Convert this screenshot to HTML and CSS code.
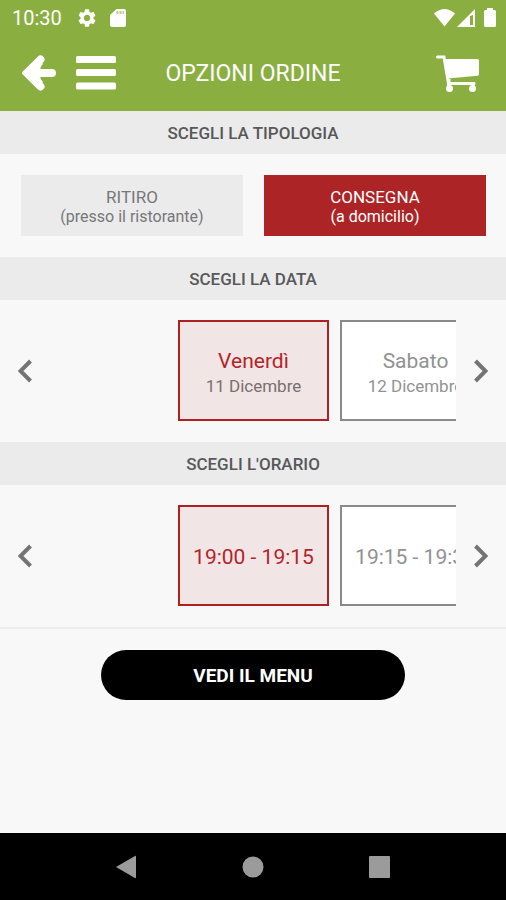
FILE: index.html
```html
<!DOCTYPE html>
<html lang="it">
<head>
<meta charset="utf-8">
<meta name="viewport" content="width=device-width, initial-scale=1">
<title>Opzioni ordine</title>
<link rel="stylesheet" href="styles.css">
</head>
<body>
<div class="top">
  <div class="status">
    <span class="clock">10:30</span>
    <svg class="gear" width="18" height="18" viewBox="2 2 20 20" aria-hidden="true"><path d="M19.14 12.94c.04-.3.06-.61.06-.94 0-.32-.02-.64-.07-.94l2.03-1.58c.18-.14.23-.41.12-.61l-1.92-3.32c-.12-.22-.37-.29-.59-.22l-2.39.96c-.5-.38-1.03-.7-1.62-.94l-.36-2.54c-.04-.24-.24-.41-.48-.41h-3.84c-.24 0-.43.17-.47.41l-.36 2.54c-.59.24-1.13.57-1.62.94l-2.39-.96c-.22-.08-.47 0-.59.22L2.74 8.87c-.12.21-.08.47.12.61l2.03 1.58c-.05.3-.09.63-.09.94s.02.64.07.94l-2.03 1.58c-.18.14-.23.41-.12.61l1.92 3.32c.12.22.37.29.59.22l2.39-.96c.5.38 1.03.7 1.62.94l.36 2.54c.05.24.24.41.48.41h3.84c.24 0 .44-.17.47-.41l.36-2.54c.59-.24 1.13-.56 1.62-.94l2.39.96c.22.08.47 0 .59-.22l1.92-3.32c.12-.22.07-.47-.12-.61l-2.01-1.58zM12 15.6c-1.98 0-3.6-1.62-3.6-3.6s1.62-3.6 3.6-3.6 3.6 1.62 3.6 3.6-1.62 3.6-3.6 3.6z"/></svg>
    <svg class="card-icon" width="16" height="20" viewBox="0 0 16 20" aria-hidden="true"><path d="M6.500 1H14a2 2 0 0 1 2 2v14a2 2 0 0 1-2 2H2a2 2 0 0 1-2-2V7z"/><path class="slots" d="M6.500 3h2v3h-2zM9.500 3h2v3h-2zM12.500 3h1.500v3h-1.500z"/></svg>
    <span class="spacer"></span>
    <svg width="21" height="18" viewBox="0 0 21 18" aria-hidden="true"><path d="M0 4.500Q10.500-4.500 21 4.500L10.500 17.500z"/></svg>
    <svg class="signal" width="18" height="18" viewBox="0 0 18 18" aria-hidden="true"><path fill-rule="evenodd" d="M18 0v18H0zM13 7v9h3V6z"/></svg>
    <svg class="battery" width="12" height="19" viewBox="0 0 12 19" aria-hidden="true"><path d="M3 0h6v2h1.500Q12 2 12 3.500v14Q12 19 10.500 19h-9Q0 19 0 17.500v-14Q0 2 1.500 2H3z"/></svg>
  </div>
  <header class="bar">
    <div class="bar-left">
      <button type="button" aria-label="Indietro"><svg width="34" height="36" viewBox="0 0 34 36"><path class="arrow" d="M18.500 4.500L5 18l13.500 13.500M6 18h24"/><path d="M0 18L15.500 2.500 21 9l-4 5v8l4 5-5.500 6.500z"/></svg></button>
      <button type="button" aria-label="Menu"><svg width="40" height="34" viewBox="0 0 40 34"><rect width="40" height="7" rx="1.500"/><rect y="13" width="40" height="7" rx="1.500"/><rect y="26.500" width="40" height="7" rx="1.500"/></svg></button>
    </div>
    <h1>OPZIONI ORDINE</h1>
    <div class="bar-right">
      <button type="button" aria-label="Carrello"><svg width="43" height="37" viewBox="0 0 43 37"><path class="cart-line" d="M1.500 2H8l4.500 26.500H38"/><path d="M8.500 4H41.500q1.500 0 1.500 1.500V19q0 1.500-1.500 1.700L12 23.500z"/><circle cx="13.500" cy="33.500" r="3.500"/><circle cx="36.500" cy="33.500" r="3.500"/><path d="M11 24h3.500v8H11zM35 27h4v5h-4z"/></svg></button>
    </div>
  </header>
</div>
<main>
  <section>
    <h2>SCEGLI LA TIPOLOGIA</h2>
    <div class="types">
      <button type="button" class="type">RITIRO<small>(presso il ristorante)</small></button>
      <button type="button" class="type active" aria-pressed="true">CONSEGNA<small>(a domicilio)</small></button>
    </div>
  </section>
  <section>
    <h2>SCEGLI LA DATA</h2>
    <div class="carousel">
      <button type="button" class="chevron" aria-label="Data precedente"><svg width="14" height="24" viewBox="0 0 14 24"><path d="M12.500 2L2.500 12l10 10"/></svg></button>
      <div class="strip">
        <button type="button" class="slot selected" aria-pressed="true">Venerdì<small>11 Dicembre</small></button>
        <button type="button" class="slot">Sabato<small>12 Dicembre</small></button>
      </div>
      <button type="button" class="chevron" aria-label="Data successiva"><svg width="14" height="24" viewBox="0 0 14 24"><path d="M1.500 2l10 10-10 10"/></svg></button>
    </div>
  </section>
  <section>
    <h2>SCEGLI L'ORARIO</h2>
    <div class="carousel">
      <button type="button" class="chevron" aria-label="Orario precedente"><svg width="14" height="24" viewBox="0 0 14 24"><path d="M12.500 2L2.500 12l10 10"/></svg></button>
      <div class="strip">
        <button type="button" class="slot selected" aria-pressed="true">19:00 - 19:15</button>
        <button type="button" class="slot">19:15 - 19:30</button>
      </div>
      <button type="button" class="chevron" aria-label="Orario successivo"><svg width="14" height="24" viewBox="0 0 14 24"><path d="M1.500 2l10 10-10 10"/></svg></button>
    </div>
  </section>
  <div class="action"><button type="button" class="go">VEDI IL MENU</button></div>
</main>
<nav class="system">
  <button type="button" aria-label="Indietro di sistema"><svg width="22" height="24" viewBox="0 0 22 24"><path d="M0 12L19 1q1-.5 1 .5v21q0 1-1 .5z"/></svg></button>
  <button type="button" aria-label="Home"><svg width="22" height="22" viewBox="0 0 22 22"><circle cx="11" cy="11" r="10.500"/></svg></button>
  <button type="button" aria-label="App recenti"><svg width="22" height="22" viewBox="0 0 22 22"><rect x="1" width="21" height="22" rx="1"/></svg></button>
</nav>
</body>
</html>
```
FILE: styles.css
```css
* {
  box-sizing: border-box;
}

body {
  display: flex;
  flex-direction: column;
  min-height: 100vh;
  margin: 0;
  background: #f8f8f8;
  color: #58585a;
  font-family: Roboto, "Liberation Sans", sans-serif;
}

button {
  margin: 0;
  padding: 0;
  border: 0;
  background: none;
  color: inherit;
  font: inherit;
}

svg {
  display: block;
}

.top {
  background: #8aaf40;
  color: #fff;
}

.top svg {
  fill: #fff;
}

.status {
  display: flex;
  align-items: center;
  height: 35px;
  padding: 0 10px 0 12px;
}

.clock {
  font-size: 20px;
}

.gear {
  margin-left: 16px;
}

.card-icon {
  margin-left: 14px;
}

.top .slots {
  fill: #b9cf8d;
}

.spacer {
  flex: 1;
}

.signal {
  margin-left: 2px;
}

.battery {
  margin-left: 9px;
}

.bar {
  display: grid;
  grid-template-columns: 1fr auto 1fr;
  align-items: center;
  height: 76px;
  padding: 0 22px;
}

.bar-left {
  display: flex;
  align-items: center;
  gap: 20px;
}

.bar-right {
  display: flex;
  justify-content: flex-end;
  padding-right: 5px;
}

.bar h1 {
  margin: 0;
  font-size: 23px;
  font-weight: 400;
}

.arrow {
  stroke: #fff;
  stroke-width: 8;
  stroke-linecap: round;
}

.cart-line {
  fill: none;
  stroke: #fff;
  stroke-width: 3;
  stroke-linecap: round;
}

h2 {
  margin: 0;
  padding-top: 2px;
  background: #ebebeb;
  font-size: 17px;
  font-weight: 500;
  line-height: 41px;
  text-align: center;
}

.types {
  display: flex;
  gap: 21px;
  padding: 21px 20px 21px 21px;
}

.type {
  flex: 1;
  height: 61px;
  padding-top: 2px;
  background: #ebebeb;
  color: #77777a;
  font-size: 17px;
  line-height: 20px;
}

.type.active {
  background: #ad2426;
  color: #fff;
}

small {
  display: block;
  font-size: 16px;
  line-height: 19px;
}

.carousel {
  display: flex;
  align-items: stretch;
  padding: 20px 0 21px;
}

.chevron {
  display: flex;
  flex: 0 0 50px;
  align-items: center;
  justify-content: center;
}

.chevron path {
  fill: none;
  stroke: #747474;
  stroke-width: 4;
}

.strip {
  display: flex;
  flex: 1;
  gap: 11px;
  min-width: 0;
  padding-left: calc(50% - 125px);
  overflow: hidden;
}

.slot {
  flex: 0 0 151px;
  height: 101px;
  padding-top: 2px;
  border: 2px solid #8a8a8a;
  background: #fff;
  color: #929292;
  font-size: 21px;
  line-height: 28px;
  white-space: nowrap;
}

.slot small {
  font-size: 17px;
  line-height: 22px;
}

.slot.selected {
  border-color: #ae2022;
  background: #f1e5e5;
  color: #b3242a;
}

.slot.selected small {
  color: #78706f;
}

.action {
  padding: 21px 20%;
  border-top: 2px solid #ececec;
}

.go {
  display: block;
  width: 100%;
  height: 50px;
  border-radius: 25px;
  background: #000;
  color: #fff;
  font-size: 19px;
  font-weight: 700;
}

main {
  flex: 1;
}

.system {
  display: flex;
  align-items: center;
  justify-content: space-between;
  height: 67px;
  padding: 0 23%;
  background: #000;
}

.system svg {
  fill: #9b9b9b;
}
```
